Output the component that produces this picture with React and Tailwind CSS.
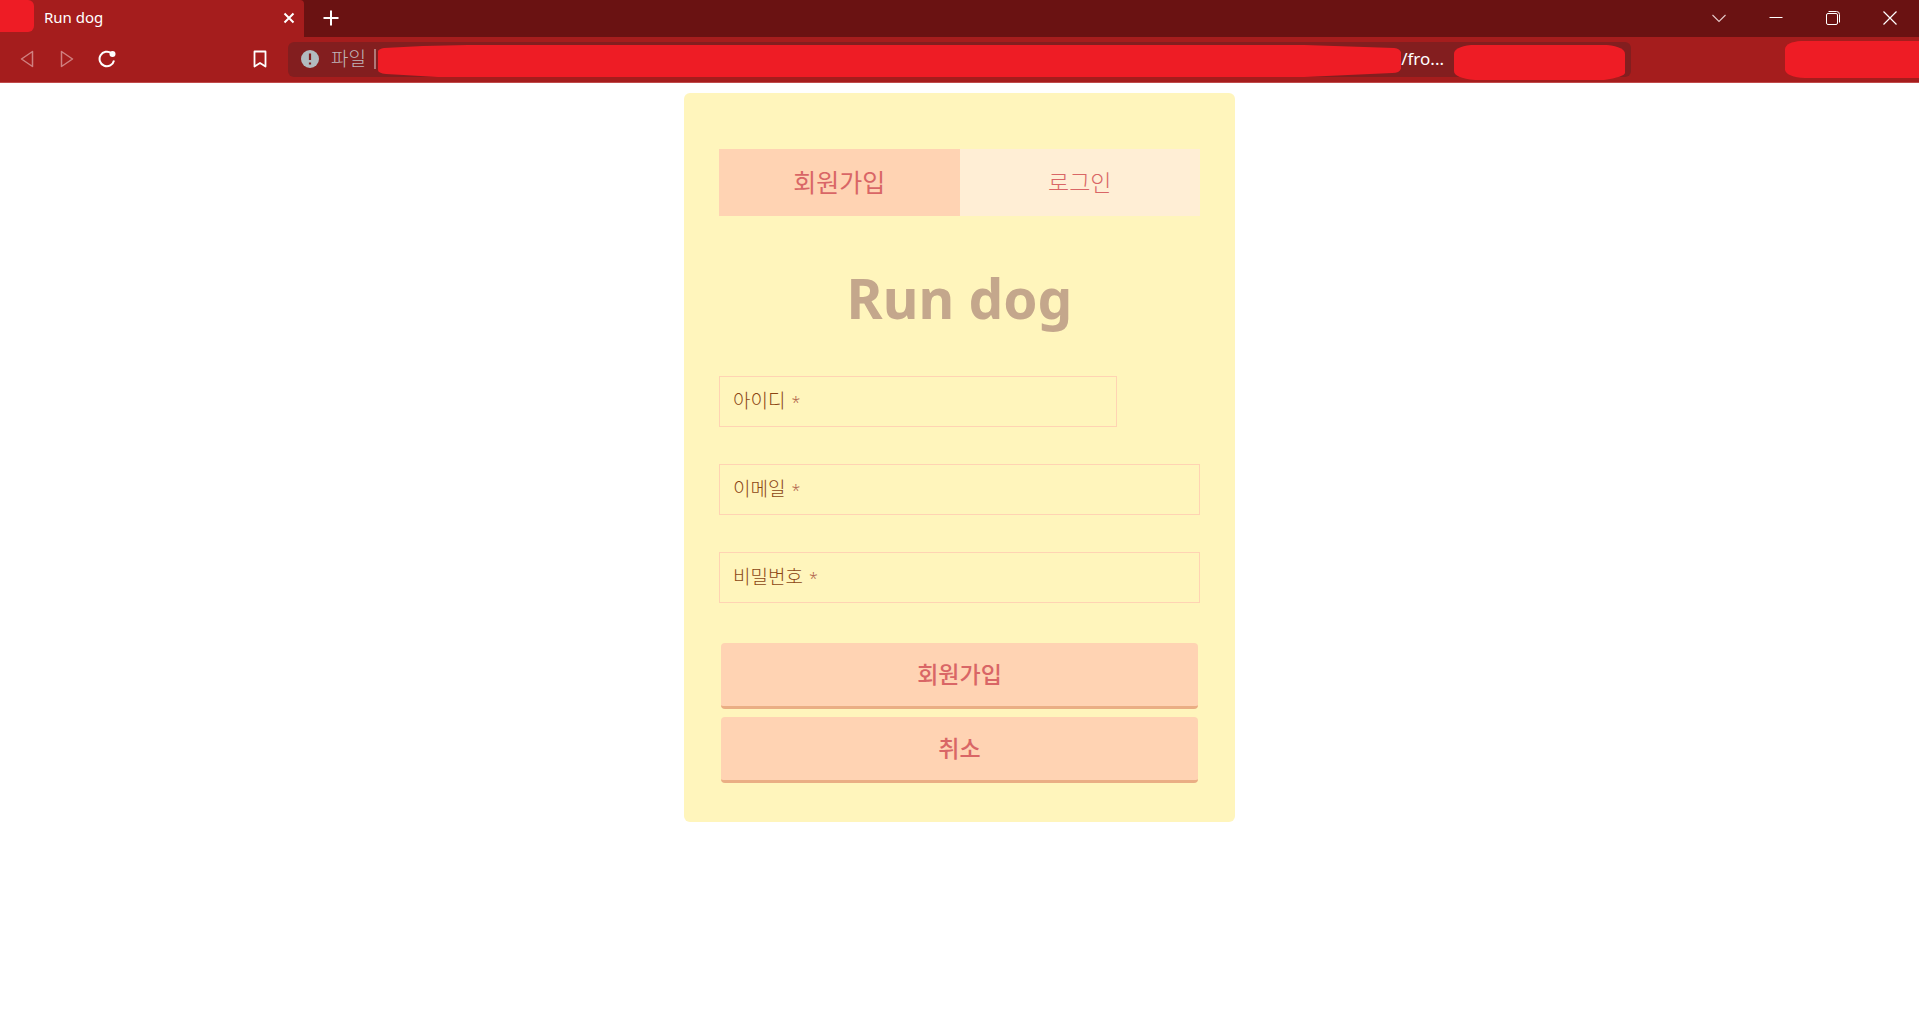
const FONT = "font-['Noto_Sans','Noto_Sans_CJK_KR',sans-serif]";

function Field({ id, label, type, width }) {
  return (
    <div className={`relative flex ${width}`}>
      <input
        id={id}
        type={type}
        required
        className="h-[51px] w-full border border-[#ffd3b3] bg-transparent px-3 text-lg text-[#8b4513] outline-none"
      />
      <label
        htmlFor={id}
        className="pointer-events-none absolute inset-y-0 left-3.5 flex items-center gap-1.5 text-[19px] font-light text-[#8b4513]"
      >
        {label} <span className="text-base text-[#b2654d]">*</span>
      </label>
    </div>
  );
}

function TabStrip() {
  return (
    <div className="flex h-[37px] items-stretch bg-[#6a1212] pb-0.5 text-white">
      <div className="-mb-0.5 flex w-[304px] items-center rounded-tr-sm bg-[#a51d1d] pr-[5px] pb-0.5">
        <div className="h-8 w-[34px] self-start rounded-r-md bg-[#ee1c25]" />
        <span className="ml-2.5 flex-1 text-[15px]">Run dog</span>
        <button aria-label="Close tab" className="p-1">
          <svg width="12" height="12" viewBox="0 0 12 12" stroke="currentColor" strokeWidth="2" fill="none">
            <path d="M1.500 1.500l9 9M10.500 1.500l-9 9" />
          </svg>
        </button>
      </div>
      <button aria-label="New tab" className="ml-[18px] flex w-[18px] items-center justify-center">
        <svg width="16" height="16" viewBox="0 0 16 16" stroke="currentColor" strokeWidth="2" fill="none">
          <path d="M8 .5v15M.5 8h15" />
        </svg>
      </button>
      <div className="ml-auto flex">
        <button aria-label="Search tabs" className="flex w-[57px] items-center justify-center">
          <svg width="14" height="14" viewBox="0 0 14 14" stroke="#e5caca" strokeWidth="1.1" fill="none">
            <path d="M.5 4l6.500 6.500 6.500-6.500" />
          </svg>
        </button>
        <button aria-label="Minimize" className="flex w-[57px] items-center justify-center">
          <svg width="14" height="14" viewBox="0 0 14 14" stroke="currentColor" fill="none">
            <path d="M.5 6.500h13" />
          </svg>
        </button>
        <button aria-label="Restore" className="flex w-[57px] items-center justify-center">
          <svg width="14" height="14" viewBox="0 0 14 14" stroke="currentColor" fill="none">
            <rect x=".5" y="2.500" width="11" height="11" rx="1.500" />
            <path d="M2.500 .5h8a3 3 0 0 1 3 3v8" />
          </svg>
        </button>
        <button aria-label="Close window" className="flex w-[58px] items-center justify-center">
          <svg width="14" height="14" viewBox="0 0 14 14" stroke="currentColor" strokeWidth="1.2" fill="none">
            <path d="M.5 .5l13 13M13.500 .5l-13 13" />
          </svg>
        </button>
      </div>
    </div>
  );
}

function Toolbar() {
  return (
    <div className="flex h-[46px] items-center border-b border-[#c04a4a] bg-[#a51d1d] pb-px text-white">
      <button aria-label="Back" className="ml-5 text-[#d08080]">
        <svg width="14" height="18" viewBox="0 0 14 18" stroke="currentColor" strokeWidth="1.500" strokeLinejoin="round" fill="none">
          <path d="M12.500 1.500v15L1.500 9z" />
        </svg>
      </button>
      <button aria-label="Forward" className="ml-[26px] text-[#d08080]">
        <svg width="14" height="18" viewBox="0 0 14 18" stroke="currentColor" strokeWidth="1.500" strokeLinejoin="round" fill="none">
          <path d="M1.500 1.500v15L12.500 9z" />
        </svg>
      </button>
      <button aria-label="Reload" className="ml-6">
        <svg width="18" height="18" viewBox="0 0 18 18" stroke="currentColor" strokeWidth="2" fill="none">
          <path d="M16 10.500A7.300 7.300 0 1 1 13.500 3.300" />
          <circle cx="14.500" cy="4" r="3" fill="currentColor" stroke="none" />
        </svg>
      </button>
      <button aria-label="Bookmark" className="ml-[137px]">
        <svg width="14" height="18" viewBox="0 0 14 18" stroke="currentColor" strokeWidth="1.800" strokeLinejoin="round" fill="none">
          <path d="M1.500 1.500h11v15L7 13 1.500 16.500z" />
        </svg>
      </button>
      <div className="ml-[21px] flex h-[35px] min-w-0 flex-1 items-center rounded-md bg-[#831e1f] pr-1.5 pl-[13px]">
        <svg width="18" height="18" viewBox="0 0 18 18" fill="none">
          <circle cx="9" cy="9" r="9" fill="#b2babf" />
          <path d="M9 3.500v6.500M9 12.500v2" stroke="#831e1f" strokeWidth="2.200" />
        </svg>
        <span className="ml-3 text-[19px] font-light text-[#c0b4b8]">파일</span>
        <div className="ml-2 h-5 w-0.5 bg-[#b07878]" />
        <div className="ml-0.5 flex h-8 min-w-0 flex-1 self-end">
          <svg className="h-full w-full" viewBox="0 0 1027 32" preserveAspectRatio="none" fill="#ee1c25">
            <path d="M0 6Q1 4 6 3L45 1 90 0H930L1020 3Q1027 4 1027 9V23Q1026 28 1018 28L930 32H60L8 29Q0 28 0 25z" />
          </svg>
        </div>
        <span className="text-[17px]">/fro...</span>
        <svg className="-mb-1.5 ml-2.5 h-[35px] w-[171px]" viewBox="0 0 171 35" fill="#ee1c25">
          <path d="M17 0H153Q171 2 171 9V28Q170 32 150 35H21Q0 33 0 26V9Q0 2 17 0z" />
        </svg>
      </div>
      <svg className="ml-[154px] h-[37px] w-[134px]" viewBox="0 0 134 37" fill="#ee1c25">
        <path d="M16 0H134V37H20Q2 36 0 29V8Q1 1 16 0z" />
      </svg>
    </div>
  );
}

export default function App() {
  return (
    <div className={`min-h-screen bg-white ${FONT}`}>
      <header>
        <TabStrip />
        <Toolbar />
      </header>
      <main className="mx-auto mt-2.5 max-w-[551px] rounded-md bg-[#fff5bc] px-[35px] pt-14 pb-[39px]">
        <nav className="grid h-[67px] grid-cols-2 text-[#d96666]">
          <a href="#signup" className="flex items-center justify-center bg-[#ffd3b3] text-[25px]">
            회원가입
          </a>
          <a href="#login" className="flex items-center justify-center bg-[#ffeed5] text-[23px] font-light">
            로그인
          </a>
        </nav>
        <h1 className="mt-[46px] text-center text-[55px] leading-[72px] font-bold text-[#c4a78c]">Run dog</h1>
        <form className="mt-[42px] flex flex-col">
          <div className="flex flex-col gap-[37px]">
            <Field id="user-id" label="아이디" type="text" width="w-[398px] max-w-full" />
            <Field id="email" label="이메일" type="email" width="w-full" />
            <Field id="password" label="비밀번호" type="password" width="w-full" />
          </div>
          <div className="mt-10 flex flex-col gap-2 px-0.5 text-[23px] font-medium text-[#d96666]">
            <button type="submit" className="h-[66px] rounded-sm border-b-3 border-[#eaae84] bg-[#ffd3b3]">
              회원가입
            </button>
            <button type="button" className="h-[66px] rounded-sm border-b-3 border-[#eaae84] bg-[#ffd3b3]">
              취소
            </button>
          </div>
        </form>
      </main>
    </div>
  );
}
